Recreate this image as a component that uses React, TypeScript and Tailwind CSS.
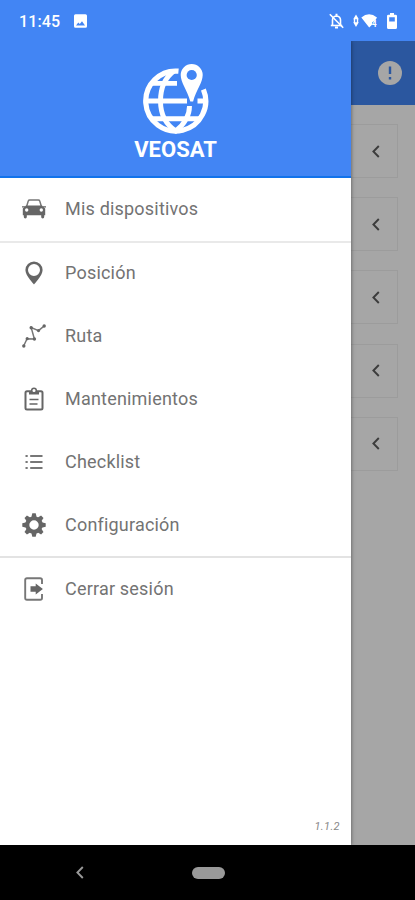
import type { ReactNode } from "react";

const CarIcon = () => (
  <svg width="24" height="20" viewBox="0 0 24 20" fill="none">
    <path d="M4.6 7.5 6.3 1.9Q6.6 1 7.6 1h8.8q1 0 1.3.9l1.7 5.6" stroke="#777" strokeWidth="1.5" />
    <path
      fillRule="evenodd"
      fill="#666"
      d="M4 6.5h16l3.2 3v6.7h-1V18q0 1.4-1.5 1.4T19.2 18v-1.8H4.8V18q0 1.4-1.5 1.4T1.8 18v-1.8h-1V9.5zM4.7 9.3a1.7 1.7 0 1 0 0 3.4 1.7 1.7 0 0 0 0-3.4zm14.6 0a1.7 1.7 0 1 0 0 3.4 1.7 1.7 0 0 0 0-3.4z"
    />
    <path d="M0 7.8h3M21 7.8h3" stroke="#666" strokeWidth="1.3" />
  </svg>
);

const PinIcon = () => (
  <svg width="18" height="24" viewBox="0 0 18 24">
    <path
      fill="#666"
      fillRule="evenodd"
      d="M9 .5A8.6 8.6 0 0 0 .4 9.1C.4 14.8 9 23.5 9 23.5s8.6-8.7 8.6-14.4A8.6 8.6 0 0 0 9 .5zm0 2.5a6 6 0 1 1 0 12 6 6 0 0 1 0-12z"
    />
  </svg>
);

const RouteIcon = () => (
  <svg width="24" height="24" viewBox="0 0 24 24" fill="#666">
    <path d="m1.5 22.3 3.6-7.6 7.3.3L9.2 3.6l7.3 3L22.6 1.7" fill="none" stroke="#777" strokeWidth="1.5" />
    <circle cx="1.8" cy="22" r="1.7" />
    <circle cx="5.2" cy="14.7" r="1.6" />
    <circle cx="12.4" cy="15" r="1.7" />
    <circle cx="9.2" cy="3.8" r="1.7" />
    <circle cx="16.5" cy="6.6" r="1.6" />
    <circle cx="22.2" cy="2" r="1.7" />
  </svg>
);

const ClipboardIcon = () => (
  <svg width="20" height="24" viewBox="0 0 20 24" fill="none" stroke="#666" strokeWidth="2">
    <rect x="1.5" y="4.2" width="17" height="18.3" rx="1.5" />
    <path d="M5 4h10v3.5H5z" fill="#666" stroke="none" />
    <circle cx="10" cy="3.5" r="2.3" fill="#fff" strokeWidth="1.5" />
    <path d="M5.5 12.500h9M5.5 17h8" strokeWidth="1.7" />
  </svg>
);

const ListIcon = () => (
  <svg width="18" height="16" viewBox="0 0 18 16" stroke="#777" strokeWidth="1.9">
    <path d="M.5 2h2.200M.5 8h2.200M.5 14h2.200M5.200 2h12.300M5.200 8h12.300M5.200 14h12.300" />
  </svg>
);

const GearIcon = () => (
  <svg width="24" height="24" viewBox="-12 -12 24 24">
    <circle r="6.7" fill="none" stroke="#666" strokeWidth="4" />
    {[0, 45, 90, 135, 180, 225, 270, 315].map((angle) => (
      <path key={angle} d="m-2.700-7.500 1-4.200h3.400l1 4.200z" fill="#666" transform={`rotate(${angle})`} />
    ))}
  </svg>
);

const LogoutIcon = () => (
  <svg width="20" height="24" viewBox="0 0 20 24" fill="none" stroke="#777" strokeWidth="1.9">
    <path d="M18 7V3q0-1.800-1.800-1.800H3Q1.200 1.200 1.200 3v18q0 1.800 1.800 1.800h13.200Q18 22.800 18 21v-4" />
    <path d="M6.500 9.300h5.200V6.400l7.200 5.600-7.200 5.600v-2.900H6.500z" fill="#666" stroke="none" />
  </svg>
);

const ChevronIcon = () => (
  <svg width="8" height="13" viewBox="0 0 8 13" fill="none" stroke="currentColor" strokeWidth="1.9">
    <path d="M6.800 1 1.400 6.500l5.400 5.500" />
  </svg>
);

const Logo = () => (
  <svg width="70" height="72" viewBox="0 0 70 72" fill="none" stroke="#fff" strokeWidth="5.2">
    <path d="M36.500 8.200A30 30 0 1 0 61.400 26.500" />
    <path d="M32 8Q18.500 18 18.500 38T33.800 68Q47.500 57 47.500 43" strokeWidth="4.9" />
    <path d="M9 20.400h26M4 38h41M55.500 38h9M9 55.800h49.500" strokeWidth="4.9" />
    {/* blue halo keeps the pin clear of the grid */}
    <path
      fill="#fff"
      stroke="#4285f4"
      strokeWidth="3"
      paintOrder="stroke"
      d="M49.700 1a11 11 0 0 0-11 11c0 7.500 6.500 15 9.600 26.500h2.800C54.200 27 60.700 19.500 60.700 12a11 11 0 0 0-11-11z"
    />
    <circle cx="49.7" cy="12" r="5.1" fill="#4285f4" stroke="none" />
  </svg>
);

const StatusBar = () => (
  <div className="relative z-20 flex h-[41px] shrink-0 items-center bg-[#4285f4] pl-[19px] pr-[18px] text-white">
    <span className="mt-0.5 w-[42px] text-[16px] font-medium leading-5 tracking-[0.1px]">11:45</span>
    <svg className="ml-[13px]" width="13" height="14" viewBox="0 0 13 14">
      <path
        fill="#fff"
        fillRule="evenodd"
        d="M1.500.3h10Q13 .3 13 1.800v10.400q0 1.500-1.500 1.500h-10Q0 13.700 0 12.200V1.800Q0 .3 1.500.3zM2 11.400h9L8 7.300l-2.200 2.800-1.500-1.700z"
      />
    </svg>
    {/* Right side: muted bell, data arrows, wifi, battery */}
    <svg className="ml-auto" width="15" height="16" viewBox="0 0 15 16" fill="none" stroke="#fff">
      <path d="M3.500 12V7q0-3.600 4-4 4 .4 4 4v5" strokeWidth="1.6" />
      <path d="M1.800 12.500h11.400" strokeWidth="1.6" />
      <path d="M7.500.8v2M6 14.600h3" strokeWidth="2" />
      <path d="m.8 1.200 13.400 13.600" strokeWidth="1.6" />
    </svg>
    <svg className="ml-[9px]" width="6" height="14" viewBox="0 0 6 14" fill="#fff">
      <path d="m3 .5 2.800 4.800H.2zM3 13 .2 8.200h5.600zM.8 4.800h1.400v4H.8zM3.800 4.800h1.400v4H3.800z" />
    </svg>
    <svg className="ml-[2px]" width="17" height="14" viewBox="0 0 17 14">
      <path d="M.3 3.500Q8-3 16 3.500L14.500 6 11 8.500v2.300L8.200 13.600z" fill="#fff" />
      <text x="10.8" y="12.5" fontSize="8.5" fontWeight="700" fill="#fff">4</text>
    </svg>
    <svg className="ml-[9px]" width="10" height="16" viewBox="0 0 10 16">
      <path
        fill="#fff"
        fillRule="evenodd"
        d="M3 0h4v1.700h1.500Q10 1.700 10 3v11.500Q10 16 8.500 16h-7Q0 16 0 14.500V3q0-1.300 1.500-1.300H3zM2.200 4.300v4.200h5.600V4.300z"
      />
    </svg>
  </div>
);

const MenuItem = ({ icon, label }: { icon: ReactNode; label: string }) => (
  <li className="flex h-[62.8px] items-center">
    <span className="flex w-[65px] pl-[22px]">
      <span className="flex w-6 justify-center">{icon}</span>
    </span>
    <span className="text-[18px] leading-6 tracking-[0.2px] text-[#737373]">{label}</span>
  </li>
);

const Drawer = () => (
  <aside className="relative z-10 flex w-[351px] shrink-0 flex-col bg-white shadow-[0_0_4px_rgba(0,0,0,0.5)]">
    <header className="flex h-[137px] flex-col items-center border-b-2 border-[#1273eb] bg-[#4285f4] pt-[22px]">
      <div className="pl-[2px]">
        <Logo />
      </div>
      <h1 className="mt-[2px] text-[22px] font-bold leading-[26px] text-white">VEOSAT</h1>
    </header>
    <ul className="border-b-2 border-[#e9e9e9]">
      <MenuItem icon={<CarIcon />} label="Mis dispositivos" />
    </ul>
    <ul className="-mt-[0.8px] border-b-2 border-[#e3e3e3]">
      <MenuItem icon={<PinIcon />} label="Posición" />
      <MenuItem icon={<RouteIcon />} label="Ruta" />
      <MenuItem icon={<ClipboardIcon />} label="Mantenimientos" />
      <MenuItem icon={<ListIcon />} label="Checklist" />
      <MenuItem icon={<GearIcon />} label="Configuración" />
    </ul>
    <ul>
      <MenuItem icon={<LogoutIcon />} label="Cerrar sesión" />
    </ul>
    <p className="mt-auto pb-[10px] pr-[11px] text-right text-[11px] italic leading-4 tracking-[0.4px] text-[#888]">
      1.1.2
    </p>
  </aside>
);

const DimmedPage = () => (
  <main className="flex flex-1 flex-col bg-[#a6a6a6]">
    <div className="flex h-16 items-center justify-end bg-[#2b579f] pr-[13px]">
      <svg width="24" height="24" viewBox="0 0 24 24">
        <circle cx="12" cy="12" r="12" fill="#a6a6a6" />
        <path d="M12 5.500v7.500M12 16v2.500" stroke="#2b579f" strokeWidth="2.4" />
      </svg>
    </div>
    <div className="flex flex-col gap-[19.2px] pt-[19px] pr-[17px] text-[#3c3c3c]">
      {[0, 1, 2, 3, 4].map((row) => (
        <div key={row} className="flex h-[54px] items-center justify-end border border-l-0 border-[#9c9c9c] pr-[17px]">
          <ChevronIcon />
        </div>
      ))}
    </div>
  </main>
);

const NavBar = () => (
  <nav className="relative z-20 flex h-[55px] shrink-0 items-center bg-black pl-[76px] text-[#999]">
    <ChevronIcon />
    <span className="ml-[108px] h-3 w-[33px] rounded-full bg-[#999]" />
  </nav>
);

export default function App() {
  return (
    <div className="flex h-[900px] w-[415px] flex-col overflow-hidden font-[Roboto,sans-serif]">
      <StatusBar />
      <div className="flex min-h-0 flex-1">
        <Drawer />
        <DimmedPage />
      </div>
      <NavBar />
    </div>
  );
}
